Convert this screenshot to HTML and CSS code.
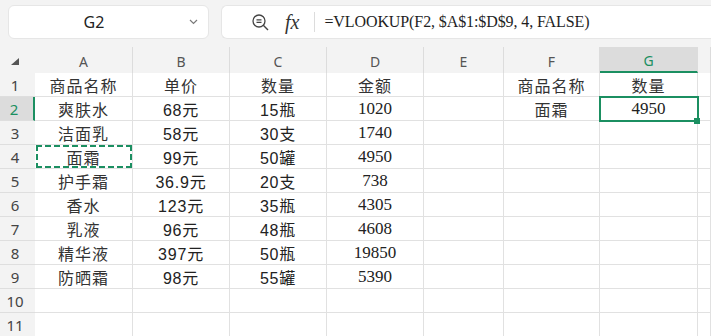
FILE: index.html
```html
<!DOCTYPE html>
<html lang="zh-CN">
  <head>
    <meta charset="UTF-8" />
    <meta name="viewport" content="width=device-width, initial-scale=1.0" />
    <title>VLOOKUP</title>
    <link rel="stylesheet" href="styles.css">
  </head>
  <body>
    <div class="toolbar">
      <div class="namebox">
        <span class="ref">G2</span>
        <svg class="chev" width="9" height="6" viewBox="0 0 9 6"><path d="M1 1 L4.5 4.5 L8 1" fill="none" stroke="#7a7a7a" stroke-width="1.2"/></svg>
      </div>
      <div class="formula">
        <svg class="zoomico" width="18" height="17" viewBox="0 0 18 17">
          <circle cx="7" cy="7" r="6" fill="none" stroke="#444" stroke-width="1.3"/>
          <path d="M4.5 5.8 H9.5 M4.5 8.4 H9.5" stroke="#444" stroke-width="1.2"/>
          <path d="M11.3 11.3 L16 16" stroke="#444" stroke-width="1.4"/>
        </svg>
        <span class="fx">fx</span>
        <span class="sep"></span>
        <span class="expr">=VLOOKUP(F2, $A$1:$D$9, 4, FALSE)</span>
      </div>
    </div>

    <div class="sheet">
      <div class="corner"><svg width="8" height="7" viewBox="0 0 8 7"><path d="M8 0 L8 7 L0 7 Z" fill="#555"/></svg></div>
      <div class="ch">A</div><div class="ch">B</div><div class="ch">C</div><div class="ch">D</div>
      <div class="ch">E</div><div class="ch">F</div><div class="ch sel">G</div><div class="ch"></div>

      <div class="rh">1</div>
      <div class="c t">商品名称</div><div class="c t">单价</div><div class="c t">数量</div><div class="c t">金额</div>
      <div class="c"></div><div class="c t">商品名称</div><div class="c t">数量</div><div class="c"></div>

      <div class="rh sel">2</div>
      <div class="c t">爽肤水</div><div class="c m">68元</div><div class="c m">15瓶</div><div class="c n">1020</div>
      <div class="c"></div><div class="c t">面霜</div><div class="c n active">4950<span class="handle"></span></div><div class="c"></div>

      <div class="rh">3</div>
      <div class="c t">洁面乳</div><div class="c m">58元</div><div class="c m">30支</div><div class="c n">1740</div>
      <div class="c"></div><div class="c"></div><div class="c"></div><div class="c"></div>

      <div class="rh">4</div>
      <div class="c t copied">面霜</div><div class="c m">99元</div><div class="c m">50罐</div><div class="c n">4950</div>
      <div class="c"></div><div class="c"></div><div class="c"></div><div class="c"></div>

      <div class="rh">5</div>
      <div class="c t">护手霜</div><div class="c m">36.9元</div><div class="c m">20支</div><div class="c n">738</div>
      <div class="c"></div><div class="c"></div><div class="c"></div><div class="c"></div>

      <div class="rh">6</div>
      <div class="c t">香水</div><div class="c m">123元</div><div class="c m">35瓶</div><div class="c n">4305</div>
      <div class="c"></div><div class="c"></div><div class="c"></div><div class="c"></div>

      <div class="rh">7</div>
      <div class="c t">乳液</div><div class="c m">96元</div><div class="c m">48瓶</div><div class="c n">4608</div>
      <div class="c"></div><div class="c"></div><div class="c"></div><div class="c"></div>

      <div class="rh">8</div>
      <div class="c t">精华液</div><div class="c m">397元</div><div class="c m">50瓶</div><div class="c n">19850</div>
      <div class="c"></div><div class="c"></div><div class="c"></div><div class="c"></div>

      <div class="rh">9</div>
      <div class="c t">防晒霜</div><div class="c m">98元</div><div class="c m">55罐</div><div class="c n">5390</div>
      <div class="c"></div><div class="c"></div><div class="c"></div><div class="c"></div>

      <div class="rh">10</div>
      <div class="c"></div><div class="c"></div><div class="c"></div><div class="c"></div>
      <div class="c"></div><div class="c"></div><div class="c"></div><div class="c"></div>

      <div class="rh">11</div>
      <div class="c"></div><div class="c"></div><div class="c"></div><div class="c"></div>
      <div class="c"></div><div class="c"></div><div class="c"></div><div class="c"></div>
    </div>
  </body>
</html>
```

FILE: styles.css
```css
:root {
  --green: #1b8f61;
  --grid: #e1e1e1;
  --head: #f3f3f3;
}
body {
  margin: 0;
  background: #fff;
  font-family: "Noto Sans", "Noto Sans CJK SC", sans-serif;
  overflow: hidden;
}
.toolbar {
  height: 47px;
  box-sizing: border-box;
  padding: 5px 0 0 8px;
  background: var(--head);
  display: flex;
  align-items: flex-start;
  gap: 12px;
}
.namebox {
  width: 201px;
  height: 34px;
  box-sizing: border-box;
  background: #fff;
  border: 1px solid #e6e6e6;
  border-radius: 6px;
  display: flex;
  align-items: center;
}
.namebox .ref {
  flex: 1;
  text-align: center;
  padding-right: 10px;
  font-size: 16px;
  color: #222;
}
.namebox .chev {
  margin-right: 10px;
}
.formula {
  flex: 1;
  min-width: 0;
  height: 34px;
  box-sizing: border-box;
  background: #fff;
  border: 1px solid #e6e6e6;
  border-right: none;
  border-radius: 6px 0 0 6px;
  display: flex;
  align-items: center;
  padding-left: 30px;
  overflow: hidden;
}
.fx {
  margin-left: 15px;
  font-family: "Liberation Serif", serif;
  font-style: italic;
  font-size: 20px;
  color: #333;
  line-height: 1;
}
.sep {
  width: 1px;
  height: 20px;
  margin-left: 15px;
  background: #dcdcdc;
}
.expr {
  margin-left: 9px;
  font-family: "Liberation Serif", serif;
  font-size: 16px;
  letter-spacing: -0.1px;
  color: #1e1e1e;
  white-space: nowrap;
}

.sheet {
  display: grid;
  grid-template-columns: 35px 98px 97px 97px 97px 80px 96px 98px minmax(0, 1fr);
  grid-template-rows: 26px repeat(11, 24px);
  overflow: hidden;
}
.corner,
.ch,
.rh,
.c {
  box-sizing: border-box;
  display: flex;
  align-items: center;
  justify-content: center;
}
.corner {
  background: var(--head);
  padding: 3px 6px 0 0;
}
.ch {
  background: var(--head);
  border-right: 1px solid #dcdcdc;
  padding-top: 2px;
  font-size: 14px;
  color: #555;
}
.ch.sel {
  background: #dcdcdc;
  color: var(--green);
  border-bottom: 2px solid var(--green);
}
.rh {
  background: var(--head);
  border-bottom: 1px solid #dedede;
  padding-right: 5px;
  font-size: 15px;
  color: #444;
}
.rh.sel {
  background: #dcdcdc;
  color: var(--green);
  border-right: 2px solid var(--green);
}
.c {
  border-right: 1px solid var(--grid);
  border-bottom: 1px solid var(--grid);
  padding-top: 1px;
  font-size: 16px;
  color: #222;
  white-space: nowrap;
}
.c.t {
  font-family: "Noto Sans CJK SC", sans-serif;
  letter-spacing: 1px;
  color: #333;
}
.c.m {
  font-family: "Liberation Sans", "Noto Sans CJK SC", sans-serif;
  font-size: 16px;
  letter-spacing: 0.8px;
}
.c.n {
  font-family: "Liberation Serif", serif;
  font-size: 17px;
}

/* active cell G2 */
.active {
  position: relative;
}
.active::after {
  content: "";
  position: absolute;
  top: -1px;
  left: -1px;
  width: 100px;
  height: 26px;
  box-sizing: border-box;
  border: 2px solid var(--green);
}
.handle {
  position: absolute;
  right: -3px;
  bottom: -4px;
  width: 6px;
  height: 6px;
  background: var(--green);
  z-index: 1;
}

/* copy marquee on A4 */
.copied {
  position: relative;
}
.copied::after {
  content: "";
  position: absolute;
  top: 0;
  left: 1px;
  right: 0;
  bottom: 0;
  background:
    repeating-linear-gradient(90deg, var(--green) 0 6px, transparent 6px 9px) top left / 100% 2px no-repeat,
    repeating-linear-gradient(90deg, var(--green) 0 6px, transparent 6px 9px) bottom left / 100% 2px no-repeat,
    repeating-linear-gradient(180deg, var(--green) 0 6px, transparent 6px 9px) top left / 2px 100% no-repeat,
    repeating-linear-gradient(180deg, var(--green) 0 6px, transparent 6px 9px) top right / 2px 100% no-repeat;
}
```
